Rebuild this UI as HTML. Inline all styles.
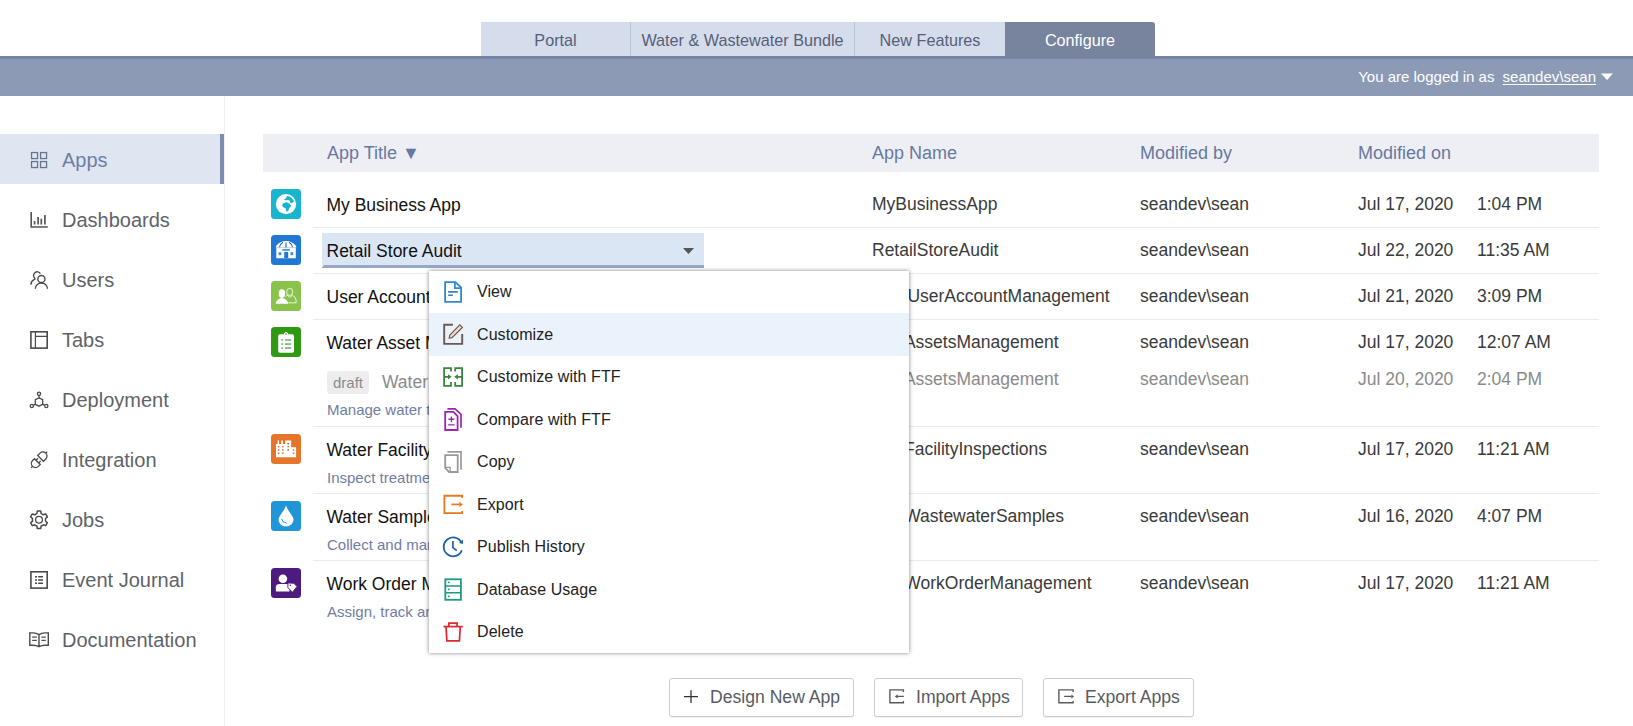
<!DOCTYPE html>
<html><head><meta charset="utf-8">
<style>
*{box-sizing:border-box;margin:0;padding:0}
html,body{width:1633px;height:726px;overflow:hidden;background:#fff}
body{font-family:"Liberation Sans",Arial,sans-serif;position:relative;color:#333}
.abs{position:absolute}
/* top tabs */
.tab{position:absolute;top:22px;height:34px;background:#d5dcec;color:#566078;font-size:16.2px;line-height:36px;text-align:center;border-right:1px solid #b9c1d6}
.tab.on{background:#78849e;color:#fff;border-right:none;border-radius:0 3px 0 0}
#bar{position:absolute;left:0;top:56px;width:1633px;height:40px;background:#8c9ab6;border-top:3px solid #7785a2}
#login{position:absolute;right:37px;top:68px;color:#fff;font-size:15px;line-height:17px;white-space:nowrap}
#login u{text-decoration:underline;text-underline-offset:2px;margin-left:4px}
/* sidebar */
#side{position:absolute;left:0;top:96px;width:225px;height:630px;border-right:1px solid #eeeeee}
.nav{position:absolute;left:0;width:224px;height:50px;color:#5f6368;font-size:20px;line-height:52px;padding-left:62px;white-space:nowrap}
.nav.on{background:#e0e6f1;border-right:4px solid #7d8cb1;color:#6f7ea6}
.nav svg{position:absolute;left:29px;top:15px;width:20px;height:20px}
/* table */
#thead{position:absolute;left:263px;top:134px;width:1336px;height:38px;background:#eeeff5;color:#6878a0;font-size:18px;line-height:39px}
#thead span{position:absolute;top:0;white-space:nowrap}
.sep{position:absolute;left:313px;width:1286px;height:1px;background:#ebebee}
.t{position:absolute;left:326.5px;font-size:17.5px;line-height:22px;color:#111;white-space:nowrap}
.c{position:absolute;font-size:17.5px;line-height:22px;color:#3a3a3a;white-space:nowrap}
.d{position:absolute;left:327px;font-size:15px;line-height:18px;color:#6f7da3;white-space:nowrap}
.g{color:#8a8a8a}
.ico{position:absolute;left:271px;width:30px;height:30px;border-radius:3.500px}
.ico svg{position:absolute;left:0;top:0;width:30px;height:30px}
/* menu */
#sel{position:absolute;left:322px;top:233px;width:382px;height:35px;background:#dbe6f5;border-bottom:3px solid #98a6c7;border-left:2px solid #dbe6f5;border-radius:0}
#menu{position:absolute;left:429px;top:271px;width:480px;height:382px;background:#fff;box-shadow:0 0 4px rgba(0,0,0,.5)}
.mi{position:absolute;left:0;width:480px;height:42px;font-size:16px;letter-spacing:0.08px;line-height:42px;color:#222;padding-left:48px;white-space:nowrap}
.mi.hl{background:#e9f0fa}
.mi svg{position:absolute;left:12px;top:9px;width:24px;height:24px}
.btn{position:absolute;top:678px;height:39px;border:1px solid #cdcdcd;border-radius:3px;background:#fff;color:#575b62;font-size:17.6px;line-height:37px;white-space:nowrap;box-shadow:0 1px 1px rgba(0,0,0,.06)}
</style></head><body>

<div class="tab" style="left:481px;width:150px">Portal</div>
<div class="tab" style="left:631px;width:224px">Water &amp; Wastewater Bundle</div>
<div class="tab" style="left:855px;width:150px;border-right:none">New Features</div>
<div class="tab on" style="left:1005px;width:150px">Configure</div>
<div id="bar"></div>
<div id="login">You are logged in as <u>seandev\sean</u></div>
<svg class="abs" style="left:1600px;top:72px" width="14" height="9" viewBox="0 0 14 9"><path d="M1 1.500h12L7 8z" fill="#fff"/></svg>

<div id="side">
</div>
<div class="nav on" style="top:134px">Apps</div>
<div class="nav" style="top:194px">Dashboards</div>
<div class="nav" style="top:254px">Users</div>
<div class="nav" style="top:314px">Tabs</div>
<div class="nav" style="top:374px">Deployment</div>
<div class="nav" style="top:434px">Integration</div>
<div class="nav" style="top:494px">Jobs</div>
<div class="nav" style="top:554px">Event Journal</div>
<div class="nav" style="top:614px">Documentation</div>

<svg class="abs" style="left:24px;top:144px" width="32" height="32" viewBox="0 0 32 32"><g fill="none" stroke="#69738b" stroke-width="1.300"><rect x="7.55" y="8.55" width="6" height="6"/><rect x="16.55" y="8.55" width="6" height="6"/><rect x="7.55" y="17.55" width="6" height="6"/><rect x="16.55" y="17.55" width="6" height="6"/></g></svg>
<svg class="abs" style="left:24px;top:204px" width="32" height="32" viewBox="0 0 32 32"><g fill="none" stroke="#555" stroke-width="1.6"><path d="M7.2 8V23H23.8"/><path d="M10.6 17V20.6M14.1 13V20.6M17.3 14.8V20.6M20.9 11V20.6" stroke-width="1.7"/></g></svg>
<svg class="abs" style="left:24px;top:264px" width="32" height="32" viewBox="0 0 32 32"><g fill="none" stroke="#4a4a4a" stroke-width="1.4"><circle cx="17.4" cy="15" r="3.55"/><path d="M11.3 24.7A6.1 5.7 0 0 1 23.5 24.7"/><path d="M16.4 9.6A3.7 3.7 0 1 0 10.8 14.3Q11.3 15 10.4 15.4Q7.2 16.8 6.9 20.6"/></g></svg>
<svg class="abs" style="left:24px;top:324px" width="32" height="32" viewBox="0 0 32 32"><g fill="none" stroke="#4a4a4a"><rect x="6.9" y="7.8" width="16.3" height="16.3" stroke-width="1.6"/><path d="M11.4 7.8V24.1M11.4 12.3H23.2" stroke-width="1.2"/></g></svg>
<svg class="abs" style="left:24px;top:384px" width="32" height="32" viewBox="0 0 32 32"><g fill="none" stroke="#4a4a4a" stroke-width="1.3"><path d="M15 13.9L18.7 15.7V20.3L15 22.2L11.3 20.3V15.7Z"/><circle cx="15" cy="9.7" r="1.6"/><circle cx="7.8" cy="22" r="1.6"/><circle cx="22.3" cy="22" r="1.6"/><path d="M15 11.3V13.9M9.3 21.3L11.3 20.3M20.8 21.3L18.7 20.3"/></g></svg>
<svg class="abs" style="left:24px;top:444px" width="32" height="32" viewBox="0 0 32 32"><g fill="none" stroke="#4a4a4a" stroke-width="1.3" transform="translate(14.95 16) rotate(-45)"><path d="M2.3 -4.1H5.6A4.1 4.1 0 0 1 5.6 4.1H2.3Z"/><path d="M-2.3 -4.1H-4.9A4.1 4.1 0 0 0 -4.9 4.1H-2.3Z"/><path d="M9.7 0H11.6M-9 0H-11M-2.3 -1.9H0.5M-2.3 1.9H0.5"/></g></svg>
<svg class="abs" style="left:24px;top:504px" width="32" height="32" viewBox="0 0 32 32"><g fill="none" stroke="#4a4a4a" stroke-width="1.5" stroke-linejoin="round"><path d="M18.30 10.08 L17.15 9.56 L16.70 7.06 L13.30 7.06 L12.85 9.56 L11.70 10.08 L10.67 10.82 L8.28 9.96 L6.58 12.90 L8.52 14.54 L8.40 15.80 L8.52 17.06 L6.58 18.70 L8.28 21.64 L10.67 20.78 L11.70 21.52 L12.85 22.04 L13.30 24.54 L16.70 24.54 L17.15 22.04 L18.30 21.52 L19.33 20.78 L21.72 21.64 L23.42 18.70 L21.48 17.06 L21.60 15.80 L21.48 14.54 L23.42 12.90 L21.72 9.96 L19.33 10.82Z"/><circle cx="15" cy="15.8" r="3.4" stroke-width="1.3"/></g></svg>
<svg class="abs" style="left:24px;top:564px" width="32" height="32" viewBox="0 0 32 32"><g fill="none" stroke="#4a4a4a"><rect x="6.9" y="7.8" width="16.3" height="16.3" stroke-width="1.6"/><path d="M11 12.8H13M14.1 12.8H19M11 16H13M14.1 16H19M11 19.2H13M14.1 19.2H19" stroke-width="1.5"/></g></svg>
<svg class="abs" style="left:24px;top:624px" width="32" height="32" viewBox="0 0 32 32"><g fill="none" stroke="#4a4a4a" stroke-width="1.4"><path d="M15 10.6Q12.5 8.9 9 8.9H5.8V21.2H9Q12.5 21.2 15 22.7Q17.500 21.2 21 21.2H24.300V8.9H21Q17.500 8.9 15 10.600ZM15 10.600V22.700"/><path d="M8.2 13.200H12.800M8.2 16.300H12.800M17.400 13.200H21.800M17.400 16.300H21.800" stroke-width="1.3"/></g></svg>
<div id="thead"><span style="left:64px">App Title ▼</span><span style="left:609px">App Name</span><span style="left:877px">Modified by</span><span style="left:1095px">Modified on</span></div>


<!-- rows -->
<div class="sep" style="top:227px"></div>
<div class="sep" style="top:273px"></div>
<div class="sep" style="top:319px"></div>
<div class="sep" style="top:426px"></div>
<div class="sep" style="top:493px"></div>
<div class="sep" style="top:560px"></div>

<div class="t" style="top:194px">My Business App</div>
<div class="c" style="left:872px;top:193px">MyBusinessApp</div>
<div class="c" style="left:1140px;top:193px">seandev\sean</div>
<div class="c" style="left:1358px;top:193px">Jul 17, 2020</div>
<div class="c" style="left:1477px;top:193px">1:04 PM</div>

<div id="sel"></div>
<div class="t" style="top:240px">Retail Store Audit</div>
<svg class="abs" style="left:682px;top:247px" width="13" height="8" viewBox="0 0 13 8"><path d="M1 1h11L6.500 7z" fill="#555"/></svg>
<div class="c" style="left:872px;top:239px">RetailStoreAudit</div>
<div class="c" style="left:1140px;top:239px">seandev\sean</div>
<div class="c" style="left:1358px;top:239px">Jul 22, 2020</div>
<div class="c" style="left:1477px;top:239px">11:35 AM</div>

<div class="t" style="top:286px">User Account Management</div>
<div class="c" style="right:523.3px;top:285px">UserAccountManagement</div>
<div class="c" style="left:1140px;top:285px">seandev\sean</div>
<div class="c" style="left:1358px;top:285px">Jul 21, 2020</div>
<div class="c" style="left:1477px;top:285px">3:09 PM</div>

<div class="t" style="top:332px">Water Asset Management</div>
<div class="c" style="right:574.4000000000001px;top:331px">WaterAssetsManagement</div>
<div class="c" style="left:1140px;top:331px">seandev\sean</div>
<div class="c" style="left:1358px;top:331px">Jul 17, 2020</div>
<div class="c" style="left:1477px;top:331px">12:07 AM</div>

<div class="abs" style="left:327px;top:371px;width:42px;height:23px;background:#ededed;border-radius:3px;color:#8a8a8a;font-size:15px;line-height:23px;text-align:center">draft</div>
<div class="t g" style="left:382px;top:371px">Water Asset Management</div>
<div class="c g" style="right:574.4000000000001px;top:368px">WaterAssetsManagement</div>
<div class="c g" style="left:1140px;top:368px">seandev\sean</div>
<div class="c g" style="left:1358px;top:368px">Jul 20, 2020</div>
<div class="c g" style="left:1477px;top:368px">2:04 PM</div>
<div class="d" style="top:401px">Manage water treatment assets</div>

<div class="t" style="top:439px">Water Facility Inspections</div>
<div class="c" style="right:586px;top:438px">WaterFacilityInspections</div>
<div class="c" style="left:1140px;top:438px">seandev\sean</div>
<div class="c" style="left:1358px;top:438px">Jul 17, 2020</div>
<div class="c" style="left:1477px;top:438px">11:21 AM</div>
<div class="d" style="top:469px">Inspect treatment facilities</div>

<div class="t" style="top:506px">Water Samples</div>
<div class="c" style="right:569px;top:505px">WaterWastewaterSamples</div>
<div class="c" style="left:1140px;top:505px">seandev\sean</div>
<div class="c" style="left:1358px;top:505px">Jul 16, 2020</div>
<div class="c" style="left:1477px;top:505px">4:07 PM</div>
<div class="d" style="top:536px">Collect and manage samples</div>

<div class="t" style="top:573px">Work Order Management</div>
<div class="c" style="right:541.3px;top:572px">WaterWorkOrderManagement</div>
<div class="c" style="left:1140px;top:572px">seandev\sean</div>
<div class="c" style="left:1358px;top:572px">Jul 17, 2020</div>
<div class="c" style="left:1477px;top:572px">11:21 AM</div>
<div class="d" style="top:603px">Assign, track and complete work orders</div>

<div class="ico" style="top:189px;background:#19b5cf"><svg viewBox="0 0 30 30"><circle cx="15" cy="15.2" r="10.1" fill="#fff"/><polygon points="12.3,14.2 15.6,13.2 18.2,14.6 20.2,16.6 19.9,17.5 18.2,19.2 17.2,21.8 16.2,22.8 15.2,22.2 14.6,19.2 12.6,18.5 11.3,16.9 11.5,15.2" fill="#19b5cf"/><polygon points="12.9,10.6 14.9,9.3 15.9,7.3 17.2,7.0 20.2,8.6 22.5,11.3 22.8,12.9 20.5,14.2 19.2,13.6 18.9,11.9 17.2,10.9 14.2,11.3" fill="#19b5cf"/></svg></div>
<div class="ico" style="top:235px;background:#1f78d3"><svg viewBox="0 0 30 30"><path d="M5 12.9V11Q9 6 15 6Q21 6 25.100 11V12.900H24.800V23.200H5.300V12.900Z" fill="#fff"/><rect x="13.200" y="16.900" width="4" height="6.300" fill="#1f78d3"/><rect x="11.300" y="14.200" width="7.600" height="1.400" fill="#1f78d3"/><rect x="7.600" y="17.200" width="2.700" height="3" fill="#3f8bdc"/><rect x="19.500" y="17.200" width="2.700" height="3" fill="#3f8bdc"/><path d="M5 12.700H25.100" stroke="#a9cdf2" stroke-width="0.900" fill="none"/><path d="M15 7.400V12.400M12 7.200Q8.900 9 8.500 12.300M18 7.200Q21.100 9 21.500 12.300" stroke="#2b62ad" stroke-width="1.100" fill="none"/></svg></div>
<div class="ico" style="top:281px;background:#89c34c"><svg viewBox="0 0 30 30"><ellipse cx="18.700" cy="10.900" rx="3.100" ry="3.600" fill="none" stroke="#e9f6d8" stroke-width="1"/><path d="M17.300 21.800H25.100V19Q25 16.300 21.300 14.300L18.700 16.300L16.300 14.300Q15 15 14.500 15.500" fill="none" stroke="#e9f6d8" stroke-width="1"/><ellipse cx="10.900" cy="12.600" rx="3.200" ry="4.300" fill="#fff"/><path d="M4.650 22.800Q5 18.300 10.900 16.800Q16.800 18.300 17.200 22.800Z" fill="#fff"/></svg></div>
<div class="ico" style="top:327px;background:#2f9913"><svg viewBox="0 0 30 30"><rect x="7.200" y="7.300" width="15.800" height="18.500" rx="1.800" fill="#fff"/><path d="M12.900 8V6.500Q15 3.500 17.200 6.500V8Z" fill="#fff"/><rect x="14.300" y="6.300" width="1.500" height="1.500" fill="#4a9a3a"/><g fill="#5d9a55"><rect x="10.300" y="12.200" width="1.600" height="1.500"/><rect x="13.900" y="12.300" width="6.300" height="1.300"/><rect x="10.300" y="16.300" width="1.600" height="1.500"/><rect x="13.900" y="16.400" width="6.300" height="1.300"/><rect x="10.300" y="20.300" width="1.600" height="1.500"/><rect x="13.900" y="20.400" width="6.300" height="1.300"/></g></svg></div>
<div class="ico" style="top:434px;background:#e5752a"><svg viewBox="0 0 30 30"><path d="M5 23.200V9.900H6.600V6.600H8V9.900H10.300V6.600H11.900V9.900H14.200V6.600H20.200V13.200H25.100V23.200Z" fill="#fff"/><g fill="#d9773a"><rect x="6.900" y="11.900" width="1.500" height="1.500"/><rect x="11.100" y="11.900" width="1.500" height="1.500"/><rect x="6.900" y="15.200" width="1.500" height="1.500"/><rect x="11.100" y="15.200" width="1.500" height="1.500"/><rect x="6.900" y="18.500" width="1.500" height="1.500"/><rect x="11.100" y="18.500" width="1.500" height="1.500"/><rect x="16.400" y="8.900" width="1.600" height="1.500" fill="#b5623a"/><rect x="16.400" y="11.900" width="1.600" height="1.500"/><rect x="16.400" y="15.200" width="1.600" height="1.500" fill="#b5623a"/><rect x="21.700" y="15.200" width="1.600" height="1.500"/><rect x="21.700" y="18.500" width="1.600" height="1.500"/></g></svg></div>
<div class="ico" style="top:501px;background:#2096d6"><svg viewBox="0 0 30 30"><path d="M15 4.600Q16 7.500 19.500 12.500Q22.500 16.500 22.500 18.800A7.500 6.700 0 0 1 7.500 18.800Q7.500 16.500 10.500 12.500Q14 7.500 15 4.600Z" fill="#fff"/><path d="M10.600 17.900Q11.300 21.300 15.600 22.200" fill="none" stroke="#2096d6" stroke-width="1"/></svg></div>
<div class="ico" style="top:568px;background:#4d1b7e"><svg viewBox="0 0 30 30"><circle cx="11.900" cy="10.800" r="4.300" fill="#fff"/><path d="M4.850 23.500V19Q5 15.900 8.500 15.900H15Q18.500 15.900 18.500 19V23.500Z" fill="#fff"/><path d="M17 14.900L22.900 15.300L26 18.500L21.500 24.200L16.800 19.600Z" fill="#fff" stroke="#4d1b7e" stroke-width="0.9"/><circle cx="19.400" cy="17.300" r="0.800" fill="#4d1b7e"/></svg></div>

<div id="menu">
<div class="mi" style="top:0">View</div>
<div class="abs" style="left:0;top:42px;width:480px;height:43px;background:#eaf2fb"></div><div class="mi" style="top:43px">Customize</div>
<div class="mi" style="top:85px">Customize with FTF</div>
<div class="mi" style="top:128px">Compare with FTF</div>
<div class="mi" style="top:170px">Copy</div>
<div class="mi" style="top:213px">Export</div>
<div class="mi" style="top:255px">Publish History</div>
<div class="mi" style="top:298px">Database Usage</div>
<div class="mi" style="top:340px">Delete</div>
<svg class="abs" style="left:7px;top:3px" width="36" height="36" viewBox="0 0 36 36"><g fill="none" stroke="#2f86d2" stroke-width="1.8"><path d="M19.300 8.100H9.100V27.900H25.100V13.400Z" stroke-linejoin="miter"/><path d="M18.900 8.100V14.200H25.100" stroke-width="1.700"/><path d="M12.100 17.900H21.800M12.100 21.300H16.900" stroke-width="1.600" stroke="#3d7fc0"/></g></svg>
<svg class="abs" style="left:7px;top:45px" width="36" height="36" viewBox="0 0 36 36"><g fill="none" stroke="#6e5754" stroke-width="1.800"><path d="M16.900 8.800H8.200V27.900H26.200V18.100" stroke-width="1.900"/><path d="M13.200 22L13.700 19.300L23.800 8.900L26.400 11.500L16 21.700Z" fill="#f6ddd3" stroke-width="1.200" stroke-linejoin="miter"/></g></svg>
<svg class="abs" style="left:7px;top:87px" width="36" height="36" viewBox="0 0 36 36"><g fill="none" stroke="#388541" stroke-width="1.800"><path d="M15 13.600V10.100H8.100V27.850H15V24M19.200 13.600V10.100H26.100V27.850H19.200V24"/><path d="M8.100 18.850H12.500M26.100 18.850H21.700" stroke-width="1.600"/><path d="M12 16.300L15.700 18.850L12 21.400ZM21.900 16.300L18.200 18.850L21.900 21.400Z" fill="#388541" stroke="none"/></g></svg>
<svg class="abs" style="left:7px;top:130px" width="36" height="36" viewBox="0 0 36 36"><g fill="none" stroke="#9b27af" stroke-width="1.800"><path d="M9.200 10.900H17.400L21.600 15.100V29H9.200Z"/><path d="M11.400 7.900H19.100L25 13.400V26.700" stroke-width="1.700"/><path d="M12.400 18.300H18.300M15.400 15.400V21.300M12.100 23.900H18.600" stroke-width="1.400"/></g></svg>
<svg class="abs" style="left:7px;top:172px" width="36" height="36" viewBox="0 0 36 36"><g fill="none" stroke="#9a9a9a" stroke-width="1.800"><path d="M9.200 12.100H21.700V29H13.100L9.200 25Z"/><path d="M9.200 24.300H14.200V29" stroke-width="1.300"/><path d="M11.400 8.800H25V26.700" stroke-width="1.700"/></g></svg>
<svg class="abs" style="left:7px;top:215px" width="36" height="36" viewBox="0 0 36 36"><g fill="none" stroke="#e87720" stroke-width="1.800"><path d="M26.150 11.900V9.750H8.400V27.150H26.150V25"/><path d="M15.400 18.400H23.500" stroke-width="1.700"/><path d="M23.300 15.800L26.900 18.400L23.300 21Z" fill="#e87720" stroke="none"/></g></svg>
<svg class="abs" style="left:7px;top:257px" width="36" height="36" viewBox="0 0 36 36"><g fill="none" stroke="#1f5fa9" stroke-width="1.800"><path d="M25.500 14.600A9.400 9.400 0 1 0 25.850 22.350"/><path d="M16.900 13.100V19.600L20.800 22.600" stroke-width="1.700"/><path d="M26.800 11.400L27 16L23 14.900Z" fill="#1f5fa9" stroke="none"/></g></svg>
<svg class="abs" style="left:7px;top:300px" width="36" height="36" viewBox="0 0 36 36"><g fill="none" stroke="#1c9a84" stroke-width="1.800"><rect x="9.300" y="8.300" width="15.600" height="20.500"/><path d="M9.300 14.900H24.900M9.300 21.800H24.900" stroke-width="1.500"/><g fill="#2a8a78" stroke="none"><circle cx="12.900" cy="11.400" r="0.900"/><circle cx="12.900" cy="18.400" r="0.900"/><circle cx="12.900" cy="25.400" r="0.900"/></g></g></svg>
<svg class="abs" style="left:7px;top:342px" width="36" height="36" viewBox="0 0 36 36"><g fill="none" stroke="#e0272f" stroke-width="1.700"><path d="M7.400 13.600H26.800"/><path d="M12.900 13.600V10.200H21.100V13.600"/><path d="M10 13.600L10.900 27.800H23.400L24.300 13.600"/></g></svg>
</div>

<div class="btn" style="left:669px;width:185px;padding-left:40px">Design New App</div>
<div class="btn" style="left:874px;width:149px;padding-left:41px">Import Apps</div>
<div class="btn" style="left:1043px;width:151px;padding-left:41px">Export Apps</div>
<svg class="abs" style="left:673px;top:678px" width="36" height="36" viewBox="0 0 36 36"><path d="M11 18.600H25M18 12.200V25" stroke="#333" stroke-width="1.300" fill="none"/></svg>
<svg class="abs" style="left:880px;top:680px" width="36" height="36" viewBox="0 0 36 36"><g fill="none" stroke="#5a5a5a" stroke-width="1.400"><path d="M23.400 11.900V9.900H9.900V22.800H23.400V21"/><path d="M17 16.400H23.800" stroke-width="1.300"/><path d="M17.600 14.300L14.800 16.400L17.600 18.500Z" fill="#5a5a5a" stroke="none"/></g></svg>
<svg class="abs" style="left:1049px;top:680px" width="36" height="36" viewBox="0 0 36 36"><g fill="none" stroke="#5a5a5a" stroke-width="1.400"><path d="M24.100 11.900V9.900H9.900V22.800H24.100V21"/><path d="M15.100 16.400H22.500" stroke-width="1.300"/><path d="M22.300 14.400L25.100 16.400L22.300 18.400Z" fill="#5a5a5a" stroke="none"/></g></svg>
</body></html>
